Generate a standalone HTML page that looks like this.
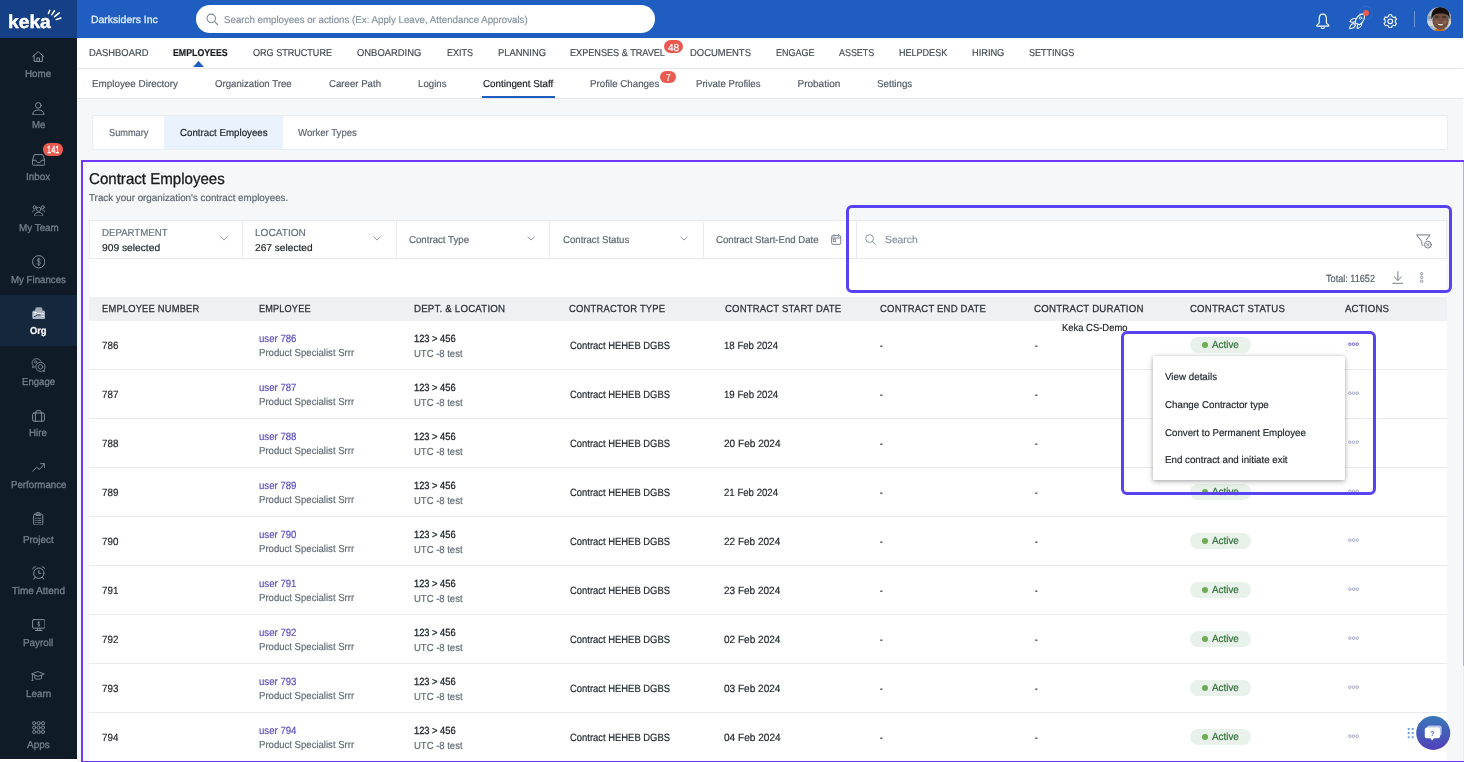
<!DOCTYPE html>
<html lang="en">
<head>
<meta charset="utf-8">
<title>Keka - Contract Employees</title>
<style>
*{box-sizing:border-box;margin:0;padding:0}
html,body{width:1464px;height:762px;overflow:hidden;background:#fff;font-family:"Liberation Sans",sans-serif;color:#212529}
body{position:relative}
#app{position:absolute;left:0;top:0;width:1464px;height:762px;overflow:hidden;will-change:transform}
.abs{position:absolute}
.t{text-rendering:geometricPrecision;-webkit-text-stroke:.18px;position:absolute;white-space:nowrap;transform-origin:0 50%;display:block}
#bg{position:absolute;left:77px;top:0;width:1387px;height:762px;background:#f6f7f9}
#side{position:absolute;left:0;top:0;width:76.75px;height:759.3px;background:#0f1b27}
#logo{position:absolute;left:0;top:0;width:76.75px;height:37.8px;background:#154085}
#orgbg{position:absolute;left:0;top:294.6px;width:76.75px;height:51.4px;background:#15273d}
#top{position:absolute;left:76.75px;top:0;width:1386.5px;height:37.6px;background:#1f5ec0}
#gsearch{position:absolute;left:196px;top:5px;width:459px;height:28px;border-radius:14px;background:#fff}
#nav1{position:absolute;left:76.75px;top:37.6px;width:1387px;height:30.4px;background:#fff;box-shadow:0 1px 2px rgba(0,0,0,.10)}
#nav2{position:absolute;left:76.75px;top:69px;width:1387px;height:30px;background:#fff;border-bottom:1px solid #e4e6ea}
.badge{position:absolute;background:#e9594f;border-radius:7px}
#tabs{position:absolute;left:92px;top:115px;width:1355.5px;height:34.5px;background:#fff;border:1px solid #ebedf0;border-radius:2px}
#tabact{position:absolute;left:164px;top:115.6px;width:118.9px;height:33.4px;background:#e9f2fd}
.pframe{position:absolute;border:2.3px solid #7038f5}
.bframe{position:absolute;border:3px solid #5742f4;border-radius:6px}
#filters{position:absolute;left:88.8px;top:220.3px;width:1358.4px;height:38.4px;background:#fff;border:1px solid #e9ebee}
.vd{position:absolute;top:221px;width:1px;height:37px;background:#e9ebee}
#totrow{position:absolute;left:88.8px;top:258.7px;width:1358.4px;height:38.3px;background:#fff}
#thead{position:absolute;left:88.8px;top:296.8px;width:1358.4px;height:24px;background:#eef0f4}
.row{position:absolute;left:88.8px;width:1358.4px;height:49px;background:#fff;border-bottom:1px solid #e9ebee}
.pill{position:absolute;left:1189.6px;width:61.6px;height:15.4px;border-radius:8px;background:#e8f1ea}
.pill i{position:absolute;left:12px;top:4.6px;width:6.2px;height:6.2px;border-radius:50%;background:#6dab55}
#menu{position:absolute;left:1152.5px;top:356px;width:192.2px;height:124px;background:#fff;box-shadow:0 1px 4px rgba(0,0,0,.30),0 2px 8px rgba(0,0,0,.10);border-radius:1.5px}
</style>
</head>
<body>
<div id="app">
<div id="bg"></div>
<div id="top"></div>
<span class="t" style="left:90.80px;top:14.20px;font-size:10.4px;line-height:13.5px;color:#e3ecfa;transform:scaleX(1.0059);-webkit-text-stroke:.3px #e3ecfa;">Darksiders Inc</span>
<div id="gsearch"></div>
<svg class="abs" style="left:205.5px;top:12.5px" width="13" height="13" viewBox="0 0 13 13" fill="none" stroke="#7d8795" stroke-width="1.1"><circle cx="5.3" cy="5.3" r="4.2"/><path d="M8.4 8.4 L12 12"/></svg>
<span class="t" style="left:224.00px;top:14.82px;font-size:9.9px;line-height:12.9px;color:#8791a0;transform:scaleX(0.9844);">Search employees or actions (Ex: Apply Leave, Attendance Approvals)</span>
<div id="nav1"></div>
<span class="t" style="left:89.00px;top:47.03px;font-size:10.0px;line-height:13.0px;color:#434a54;transform:scaleX(0.9386);">DASHBOARD</span>
<span class="t" style="left:173.25px;top:47.03px;font-size:10.0px;line-height:13.0px;color:#15191e;font-weight:bold;transform:scaleX(0.8791);">EMPLOYEES</span>
<span class="t" style="left:253.00px;top:47.03px;font-size:10.0px;line-height:13.0px;color:#434a54;transform:scaleX(0.9052);">ORG STRUCTURE</span>
<span class="t" style="left:357.25px;top:47.03px;font-size:10.0px;line-height:13.0px;color:#434a54;transform:scaleX(0.9408);">ONBOARDING</span>
<span class="t" style="left:446.50px;top:47.03px;font-size:10.0px;line-height:13.0px;color:#434a54;transform:scaleX(0.8982);">EXITS</span>
<span class="t" style="left:497.50px;top:47.03px;font-size:10.0px;line-height:13.0px;color:#434a54;transform:scaleX(0.9397);">PLANNING</span>
<span class="t" style="left:570.25px;top:47.03px;font-size:10.0px;line-height:13.0px;color:#434a54;transform:scaleX(0.9118);">EXPENSES &amp; TRAVEL</span>
<span class="t" style="left:690.00px;top:47.03px;font-size:10.0px;line-height:13.0px;color:#434a54;transform:scaleX(0.9456);">DOCUMENTS</span>
<span class="t" style="left:775.75px;top:47.03px;font-size:10.0px;line-height:13.0px;color:#434a54;transform:scaleX(0.8987);">ENGAGE</span>
<span class="t" style="left:839.25px;top:47.03px;font-size:10.0px;line-height:13.0px;color:#434a54;transform:scaleX(0.8922);">ASSETS</span>
<span class="t" style="left:899.25px;top:47.03px;font-size:10.0px;line-height:13.0px;color:#434a54;transform:scaleX(0.9034);">HELPDESK</span>
<span class="t" style="left:972.25px;top:47.03px;font-size:10.0px;line-height:13.0px;color:#434a54;transform:scaleX(0.9227);">HIRING</span>
<span class="t" style="left:1029.25px;top:47.03px;font-size:10.0px;line-height:13.0px;color:#434a54;transform:scaleX(0.9039);">SETTINGS</span>
<div class="badge" style="left:664.4px;top:40.4px;width:18.6px;height:12.5px"></div>
<span class="t" style="left:667.70px;top:42.02px;font-size:10.2px;line-height:13.3px;color:#fff;transform:scaleX(0.9858);">48</span>
<svg class="abs" style="left:193px;top:61px" width="11" height="6" viewBox="0 0 11 6"><path d="M0 6 L5.5 0 L11 6 Z" fill="#205dc1"/></svg>
<div id="nav2"></div>
<span class="t" style="left:92.00px;top:77.93px;font-size:10.0px;line-height:13.0px;color:#535b66;transform:scaleX(0.9857);">Employee Directory</span>
<span class="t" style="left:214.75px;top:77.93px;font-size:10.0px;line-height:13.0px;color:#535b66;transform:scaleX(0.9643);">Organization Tree</span>
<span class="t" style="left:329.00px;top:77.93px;font-size:10.0px;line-height:13.0px;color:#535b66;transform:scaleX(0.9652);">Career Path</span>
<span class="t" style="left:417.50px;top:77.93px;font-size:10.0px;line-height:13.0px;color:#535b66;transform:scaleX(0.9672);">Logins</span>
<span class="t" style="left:483.00px;top:77.93px;font-size:10.0px;line-height:13.0px;color:#15191e;transform:scaleX(0.9825);">Contingent Staff</span>
<span class="t" style="left:590.00px;top:77.93px;font-size:10.0px;line-height:13.0px;color:#535b66;transform:scaleX(0.9733);">Profile Changes</span>
<span class="t" style="left:696.25px;top:77.93px;font-size:10.0px;line-height:13.0px;color:#535b66;transform:scaleX(0.9592);">Private Profiles</span>
<span class="t" style="left:797.50px;top:77.93px;font-size:10.0px;line-height:13.0px;color:#535b66;">Probation</span>
<span class="t" style="left:876.75px;top:77.93px;font-size:10.0px;line-height:13.0px;color:#535b66;transform:scaleX(0.9756);">Settings</span>
<div class="badge" style="left:660.3px;top:71.1px;width:15.8px;height:12.3px"></div>
<span class="t" style="left:665.80px;top:72.42px;font-size:10.2px;line-height:13.3px;color:#fff;transform:scaleX(0.8167);">7</span>
<div class="abs" style="left:482px;top:96.4px;width:73px;height:2.1px;background:#205dc1"></div>
<div id="tabs"></div><div id="tabact"></div>
<span class="t" style="left:108.50px;top:127.42px;font-size:10.2px;line-height:13.3px;color:#5d6570;transform:scaleX(0.9035);">Summary</span>
<span class="t" style="left:179.60px;top:127.42px;font-size:10.2px;line-height:13.3px;color:#1a1e23;transform:scaleX(0.9549);">Contract Employees</span>
<span class="t" style="left:298.00px;top:127.42px;font-size:10.2px;line-height:13.3px;color:#5d6570;transform:scaleX(0.9431);">Worker Types</span>
<span class="t" style="left:89.00px;top:170.44px;font-size:15.6px;line-height:20.3px;color:#15191e;transform:scaleX(0.9672);-webkit-text-stroke:.3px #15191e;">Contract Employees</span>
<span class="t" style="left:89.00px;top:192.87px;font-size:9.9px;line-height:12.9px;color:#5d6570;transform:scaleX(0.9924);">Track your organization's contract employees.</span>
<div id="filters"></div>
<div class="vd" style="left:242.3px"></div>
<div class="vd" style="left:395.8px"></div>
<div class="vd" style="left:549.3px"></div>
<div class="vd" style="left:702.8px"></div>
<div class="vd" style="left:856.3px"></div>
<span class="t" style="left:101.60px;top:226.82px;font-size:10.2px;line-height:13.3px;color:#66707d;transform:scaleX(0.9476);">DEPARTMENT</span>
<span class="t" style="left:101.60px;top:241.84px;font-size:10.0px;line-height:13.0px;color:#1d2126;transform:scaleX(1.0241);">909 selected</span>
<svg class="abs" style="left:219.8px;top:236.1px" width="8" height="5" viewBox="0 0 8 5" fill="none" stroke="#7d8795" stroke-width=".9"><path d="M0.5 0.6 L4 4.1 L7.5 0.6"/></svg>
<span class="t" style="left:255.00px;top:226.82px;font-size:10.2px;line-height:13.3px;color:#66707d;transform:scaleX(0.9909);">LOCATION</span>
<span class="t" style="left:255.00px;top:241.84px;font-size:10.0px;line-height:13.0px;color:#1d2126;transform:scaleX(1.0152);">267 selected</span>
<svg class="abs" style="left:373.2px;top:236.1px" width="8" height="5" viewBox="0 0 8 5" fill="none" stroke="#7d8795" stroke-width=".9"><path d="M0.5 0.6 L4 4.1 L7.5 0.6"/></svg>
<span class="t" style="left:408.90px;top:234.03px;font-size:10.0px;line-height:13.0px;color:#5d6570;transform:scaleX(0.9667);">Contract Type</span>
<svg class="abs" style="left:526.5px;top:236.1px" width="8" height="5" viewBox="0 0 8 5" fill="none" stroke="#7d8795" stroke-width=".9"><path d="M0.5 0.6 L4 4.1 L7.5 0.6"/></svg>
<span class="t" style="left:562.50px;top:234.03px;font-size:10.0px;line-height:13.0px;color:#5d6570;transform:scaleX(0.9612);">Contract Status</span>
<svg class="abs" style="left:680px;top:236.1px" width="8" height="5" viewBox="0 0 8 5" fill="none" stroke="#7d8795" stroke-width=".9"><path d="M0.5 0.6 L4 4.1 L7.5 0.6"/></svg>
<span class="t" style="left:715.75px;top:234.03px;font-size:10.0px;line-height:13.0px;color:#5d6570;transform:scaleX(0.9612);">Contract Start-End Date</span>
<svg class="abs" style="left:831.3px;top:234.3px" width="10.4" height="11" viewBox="0 0 10.4 11" fill="none" stroke="#6b7480" stroke-width=".9"><rect x="0.6" y="1.6" width="9.2" height="8.8" rx="1.6"/><path d="M2.9 0.3 V2.6 M7.5 0.3 V2.6 M0.8 4 H9.6"/><rect x="2.2" y="5.2" width="2.5" height="2.5" stroke-width=".7"/></svg>
<svg class="abs" style="left:864.8px;top:234px" width="11.4" height="11.4" viewBox="0 0 11.4 11.4" fill="none" stroke="#8d97a5" stroke-width="1"><circle cx="4.6" cy="4.6" r="3.9"/><path d="M7.5 7.5 L10.8 10.8"/></svg>
<span class="t" style="left:885.00px;top:233.82px;font-size:10.2px;line-height:13.3px;color:#8791a0;transform:scaleX(1.0122);">Search</span>
<svg class="abs" style="left:1415.6px;top:233.8px" width="17" height="15.4" viewBox="0 0 17 15.4" fill="none" stroke="#6b7480" stroke-width=".95" stroke-linejoin="round" stroke-linecap="round"><path d="M10.4 5.7 L14.1 0.9 H0.7 L5.8 7.6 V10.6 C5.8 11.3 6.2 11.7 7 11.7"/><circle cx="11.9" cy="10.7" r="3.4"/><path d="M10.5 9.3 L13.3 12.1 M13.3 9.3 L10.5 12.1" stroke-width=".85"/></svg>
<div id="totrow"></div>
<span class="t" style="left:1326.30px;top:273.35px;font-size:10.4px;line-height:13.5px;color:#535b66;transform:scaleX(0.8776);">Total: 11652</span>
<svg class="abs" style="left:1391.6px;top:270.9px" width="11.8" height="13" viewBox="0 0 11.8 13" fill="none" stroke="#6b7480" stroke-width=".95"><path d="M5.9 0.3 V9.4 M2 5.6 L5.9 9.5 L9.8 5.6 M0.3 12.3 H11.5"/></svg>
<svg class="abs" style="left:1419.4px;top:271.8px" width="5.4" height="11" viewBox="0 0 5.4 11" fill="none" stroke="#7a8390" stroke-width=".8"><circle cx="2.7" cy="1.7" r="1.2"/><circle cx="2.7" cy="5.5" r="1.2"/><circle cx="2.7" cy="9.3" r="1.2"/></svg>
<div id="thead"></div>
<span class="t" style="left:101.75px;top:303.02px;font-size:10.2px;line-height:13.3px;color:#2a2f36;letter-spacing:0.2px;transform:scaleX(0.9190);-webkit-text-stroke:.25px #2a2f36;">EMPLOYEE NUMBER</span>
<span class="t" style="left:259.25px;top:303.02px;font-size:10.2px;line-height:13.3px;color:#2a2f36;letter-spacing:0.2px;transform:scaleX(0.8963);-webkit-text-stroke:.25px #2a2f36;">EMPLOYEE</span>
<span class="t" style="left:414.00px;top:303.02px;font-size:10.2px;line-height:13.3px;color:#2a2f36;letter-spacing:0.2px;transform:scaleX(0.9517);-webkit-text-stroke:.25px #2a2f36;">DEPT. &amp; LOCATION</span>
<span class="t" style="left:569.25px;top:303.02px;font-size:10.2px;line-height:13.3px;color:#2a2f36;letter-spacing:0.2px;transform:scaleX(0.9261);-webkit-text-stroke:.25px #2a2f36;">CONTRACTOR TYPE</span>
<span class="t" style="left:724.50px;top:303.02px;font-size:10.2px;line-height:13.3px;color:#2a2f36;letter-spacing:0.2px;transform:scaleX(0.9341);-webkit-text-stroke:.25px #2a2f36;">CONTRACT START DATE</span>
<span class="t" style="left:879.50px;top:303.02px;font-size:10.2px;line-height:13.3px;color:#2a2f36;letter-spacing:0.2px;transform:scaleX(0.9349);-webkit-text-stroke:.25px #2a2f36;">CONTRACT END DATE</span>
<span class="t" style="left:1034.30px;top:303.02px;font-size:10.2px;line-height:13.3px;color:#2a2f36;letter-spacing:0.2px;transform:scaleX(0.9528);-webkit-text-stroke:.25px #2a2f36;">CONTRACT DURATION</span>
<span class="t" style="left:1189.50px;top:303.02px;font-size:10.2px;line-height:13.3px;color:#2a2f36;letter-spacing:0.2px;transform:scaleX(0.9415);-webkit-text-stroke:.25px #2a2f36;">CONTRACT STATUS</span>
<span class="t" style="left:1344.50px;top:303.02px;font-size:10.2px;line-height:13.3px;color:#2a2f36;letter-spacing:0.2px;transform:scaleX(0.9465);-webkit-text-stroke:.25px #2a2f36;">ACTIONS</span>
<div class="row" style="top:320.5px"></div>
<span class="t" style="left:101.60px;top:340.31px;font-size:10.5px;line-height:13.7px;color:#1d2126;transform:scaleX(0.9333);">786</span>
<span class="t" style="left:259.40px;top:333.31px;font-size:10.5px;line-height:13.7px;color:#5a4cc0;transform:scaleX(0.9166);">user 786</span>
<span class="t" style="left:259.40px;top:347.02px;font-size:10.2px;line-height:13.3px;color:#626a75;transform:scaleX(0.9387);">Product Specialist Srrr</span>
<span class="t" style="left:414.40px;top:333.05px;font-size:10.4px;line-height:13.5px;color:#1d2126;transform:scaleX(0.8944);-webkit-text-stroke:.3px #1d2126;">123 &gt; 456</span>
<span class="t" style="left:414.40px;top:347.92px;font-size:10.2px;line-height:13.3px;color:#626a75;transform:scaleX(0.9321);">UTC -8 test</span>
<span class="t" style="left:569.50px;top:340.31px;font-size:10.5px;line-height:13.7px;color:#1d2126;transform:scaleX(0.8973);">Contract HEHEB DGBS</span>
<span class="t" style="left:724.30px;top:340.31px;font-size:10.5px;line-height:13.7px;color:#1d2126;transform:scaleX(0.9167);">18 Feb 2024</span>
<span class="t" style="left:879.50px;top:340.31px;font-size:10.5px;line-height:13.7px;color:#1d2126;transform:scaleX(0.7500);">-</span>
<span class="t" style="left:1034.50px;top:340.31px;font-size:10.5px;line-height:13.7px;color:#1d2126;transform:scaleX(0.7500);">-</span>
<div class="pill" style="top:337.4px"><i></i></div>
<span class="t" style="left:1211.70px;top:339.33px;font-size:10.3px;line-height:13.4px;color:#2f7038;transform:scaleX(0.9571);">Active</span>
<svg class="abs" style="left:1348.4px;top:342.4px" width="11" height="4.4" viewBox="0 0 11 4.4" fill="none" stroke="#5b57c9" stroke-width=".9"><circle cx="1.8" cy="2.2" r="1.3"/><circle cx="5.5" cy="2.2" r="1.3"/><circle cx="9.2" cy="2.2" r="1.3"/></svg>
<div class="row" style="top:369.5px"></div>
<span class="t" style="left:101.60px;top:389.31px;font-size:10.5px;line-height:13.7px;color:#1d2126;transform:scaleX(0.9333);">787</span>
<span class="t" style="left:259.40px;top:382.31px;font-size:10.5px;line-height:13.7px;color:#5a4cc0;transform:scaleX(0.9166);">user 787</span>
<span class="t" style="left:259.40px;top:396.02px;font-size:10.2px;line-height:13.3px;color:#626a75;transform:scaleX(0.9387);">Product Specialist Srrr</span>
<span class="t" style="left:414.40px;top:382.05px;font-size:10.4px;line-height:13.5px;color:#1d2126;transform:scaleX(0.8944);-webkit-text-stroke:.3px #1d2126;">123 &gt; 456</span>
<span class="t" style="left:414.40px;top:396.92px;font-size:10.2px;line-height:13.3px;color:#626a75;transform:scaleX(0.9321);">UTC -8 test</span>
<span class="t" style="left:569.50px;top:389.31px;font-size:10.5px;line-height:13.7px;color:#1d2126;transform:scaleX(0.8973);">Contract HEHEB DGBS</span>
<span class="t" style="left:724.30px;top:389.31px;font-size:10.5px;line-height:13.7px;color:#1d2126;transform:scaleX(0.9184);">19 Feb 2024</span>
<span class="t" style="left:879.50px;top:389.31px;font-size:10.5px;line-height:13.7px;color:#1d2126;transform:scaleX(0.7500);">-</span>
<span class="t" style="left:1034.50px;top:389.31px;font-size:10.5px;line-height:13.7px;color:#1d2126;transform:scaleX(0.7500);">-</span>
<div class="pill" style="top:386.4px"><i></i></div>
<span class="t" style="left:1211.70px;top:388.33px;font-size:10.3px;line-height:13.4px;color:#2f7038;transform:scaleX(0.9571);">Active</span>
<svg class="abs" style="left:1348.4px;top:391.4px" width="11" height="4.4" viewBox="0 0 11 4.4" fill="none" stroke="#9aa1bd" stroke-width=".9"><circle cx="1.8" cy="2.2" r="1.3"/><circle cx="5.5" cy="2.2" r="1.3"/><circle cx="9.2" cy="2.2" r="1.3"/></svg>
<div class="row" style="top:418.5px"></div>
<span class="t" style="left:101.60px;top:438.31px;font-size:10.5px;line-height:13.7px;color:#1d2126;transform:scaleX(0.9333);">788</span>
<span class="t" style="left:259.40px;top:431.31px;font-size:10.5px;line-height:13.7px;color:#5a4cc0;transform:scaleX(0.9166);">user 788</span>
<span class="t" style="left:259.40px;top:445.02px;font-size:10.2px;line-height:13.3px;color:#626a75;transform:scaleX(0.9387);">Product Specialist Srrr</span>
<span class="t" style="left:414.40px;top:431.05px;font-size:10.4px;line-height:13.5px;color:#1d2126;transform:scaleX(0.8944);-webkit-text-stroke:.3px #1d2126;">123 &gt; 456</span>
<span class="t" style="left:414.40px;top:445.92px;font-size:10.2px;line-height:13.3px;color:#626a75;transform:scaleX(0.9321);">UTC -8 test</span>
<span class="t" style="left:569.50px;top:438.31px;font-size:10.5px;line-height:13.7px;color:#1d2126;transform:scaleX(0.8973);">Contract HEHEB DGBS</span>
<span class="t" style="left:724.30px;top:438.31px;font-size:10.5px;line-height:13.7px;color:#1d2126;transform:scaleX(0.9590);">20 Feb 2024</span>
<span class="t" style="left:879.50px;top:438.31px;font-size:10.5px;line-height:13.7px;color:#1d2126;transform:scaleX(0.7500);">-</span>
<span class="t" style="left:1034.50px;top:438.31px;font-size:10.5px;line-height:13.7px;color:#1d2126;transform:scaleX(0.7500);">-</span>
<div class="pill" style="top:435.4px"><i></i></div>
<span class="t" style="left:1211.70px;top:437.33px;font-size:10.3px;line-height:13.4px;color:#2f7038;transform:scaleX(0.9571);">Active</span>
<svg class="abs" style="left:1348.4px;top:440.4px" width="11" height="4.4" viewBox="0 0 11 4.4" fill="none" stroke="#9aa1bd" stroke-width=".9"><circle cx="1.8" cy="2.2" r="1.3"/><circle cx="5.5" cy="2.2" r="1.3"/><circle cx="9.2" cy="2.2" r="1.3"/></svg>
<div class="row" style="top:467.5px"></div>
<span class="t" style="left:101.60px;top:487.31px;font-size:10.5px;line-height:13.7px;color:#1d2126;transform:scaleX(0.9333);">789</span>
<span class="t" style="left:259.40px;top:480.31px;font-size:10.5px;line-height:13.7px;color:#5a4cc0;transform:scaleX(0.9166);">user 789</span>
<span class="t" style="left:259.40px;top:494.02px;font-size:10.2px;line-height:13.3px;color:#626a75;transform:scaleX(0.9387);">Product Specialist Srrr</span>
<span class="t" style="left:414.40px;top:480.05px;font-size:10.4px;line-height:13.5px;color:#1d2126;transform:scaleX(0.8944);-webkit-text-stroke:.3px #1d2126;">123 &gt; 456</span>
<span class="t" style="left:414.40px;top:494.92px;font-size:10.2px;line-height:13.3px;color:#626a75;transform:scaleX(0.9321);">UTC -8 test</span>
<span class="t" style="left:569.50px;top:487.31px;font-size:10.5px;line-height:13.7px;color:#1d2126;transform:scaleX(0.8973);">Contract HEHEB DGBS</span>
<span class="t" style="left:724.30px;top:487.31px;font-size:10.5px;line-height:13.7px;color:#1d2126;transform:scaleX(0.9167);">21 Feb 2024</span>
<span class="t" style="left:879.50px;top:487.31px;font-size:10.5px;line-height:13.7px;color:#1d2126;transform:scaleX(0.7500);">-</span>
<span class="t" style="left:1034.50px;top:487.31px;font-size:10.5px;line-height:13.7px;color:#1d2126;transform:scaleX(0.7500);">-</span>
<div class="pill" style="top:484.4px"><i></i></div>
<span class="t" style="left:1211.70px;top:486.33px;font-size:10.3px;line-height:13.4px;color:#2f7038;transform:scaleX(0.9571);">Active</span>
<svg class="abs" style="left:1348.4px;top:489.4px" width="11" height="4.4" viewBox="0 0 11 4.4" fill="none" stroke="#9aa1bd" stroke-width=".9"><circle cx="1.8" cy="2.2" r="1.3"/><circle cx="5.5" cy="2.2" r="1.3"/><circle cx="9.2" cy="2.2" r="1.3"/></svg>
<div class="row" style="top:516.5px"></div>
<span class="t" style="left:101.60px;top:536.31px;font-size:10.5px;line-height:13.7px;color:#1d2126;transform:scaleX(0.9333);">790</span>
<span class="t" style="left:259.40px;top:529.31px;font-size:10.5px;line-height:13.7px;color:#5a4cc0;transform:scaleX(0.9166);">user 790</span>
<span class="t" style="left:259.40px;top:543.02px;font-size:10.2px;line-height:13.3px;color:#626a75;transform:scaleX(0.9387);">Product Specialist Srrr</span>
<span class="t" style="left:414.40px;top:529.05px;font-size:10.4px;line-height:13.5px;color:#1d2126;transform:scaleX(0.8944);-webkit-text-stroke:.3px #1d2126;">123 &gt; 456</span>
<span class="t" style="left:414.40px;top:543.92px;font-size:10.2px;line-height:13.3px;color:#626a75;transform:scaleX(0.9321);">UTC -8 test</span>
<span class="t" style="left:569.50px;top:536.31px;font-size:10.5px;line-height:13.7px;color:#1d2126;transform:scaleX(0.8973);">Contract HEHEB DGBS</span>
<span class="t" style="left:724.30px;top:536.31px;font-size:10.5px;line-height:13.7px;color:#1d2126;transform:scaleX(0.9539);">22 Feb 2024</span>
<span class="t" style="left:879.50px;top:536.31px;font-size:10.5px;line-height:13.7px;color:#1d2126;transform:scaleX(0.7500);">-</span>
<span class="t" style="left:1034.50px;top:536.31px;font-size:10.5px;line-height:13.7px;color:#1d2126;transform:scaleX(0.7500);">-</span>
<div class="pill" style="top:533.4px"><i></i></div>
<span class="t" style="left:1211.70px;top:535.33px;font-size:10.3px;line-height:13.4px;color:#2f7038;transform:scaleX(0.9571);">Active</span>
<svg class="abs" style="left:1348.4px;top:538.4px" width="11" height="4.4" viewBox="0 0 11 4.4" fill="none" stroke="#9aa1bd" stroke-width=".9"><circle cx="1.8" cy="2.2" r="1.3"/><circle cx="5.5" cy="2.2" r="1.3"/><circle cx="9.2" cy="2.2" r="1.3"/></svg>
<div class="row" style="top:565.5px"></div>
<span class="t" style="left:101.60px;top:585.31px;font-size:10.5px;line-height:13.7px;color:#1d2126;transform:scaleX(0.9333);">791</span>
<span class="t" style="left:259.40px;top:578.31px;font-size:10.5px;line-height:13.7px;color:#5a4cc0;transform:scaleX(0.9166);">user 791</span>
<span class="t" style="left:259.40px;top:592.02px;font-size:10.2px;line-height:13.3px;color:#626a75;transform:scaleX(0.9387);">Product Specialist Srrr</span>
<span class="t" style="left:414.40px;top:578.05px;font-size:10.4px;line-height:13.5px;color:#1d2126;transform:scaleX(0.8944);-webkit-text-stroke:.3px #1d2126;">123 &gt; 456</span>
<span class="t" style="left:414.40px;top:592.92px;font-size:10.2px;line-height:13.3px;color:#626a75;transform:scaleX(0.9321);">UTC -8 test</span>
<span class="t" style="left:569.50px;top:585.31px;font-size:10.5px;line-height:13.7px;color:#1d2126;transform:scaleX(0.8973);">Contract HEHEB DGBS</span>
<span class="t" style="left:724.30px;top:585.31px;font-size:10.5px;line-height:13.7px;color:#1d2126;transform:scaleX(0.9539);">23 Feb 2024</span>
<span class="t" style="left:879.50px;top:585.31px;font-size:10.5px;line-height:13.7px;color:#1d2126;transform:scaleX(0.7500);">-</span>
<span class="t" style="left:1034.50px;top:585.31px;font-size:10.5px;line-height:13.7px;color:#1d2126;transform:scaleX(0.7500);">-</span>
<div class="pill" style="top:582.4px"><i></i></div>
<span class="t" style="left:1211.70px;top:584.33px;font-size:10.3px;line-height:13.4px;color:#2f7038;transform:scaleX(0.9571);">Active</span>
<svg class="abs" style="left:1348.4px;top:587.4px" width="11" height="4.4" viewBox="0 0 11 4.4" fill="none" stroke="#9aa1bd" stroke-width=".9"><circle cx="1.8" cy="2.2" r="1.3"/><circle cx="5.5" cy="2.2" r="1.3"/><circle cx="9.2" cy="2.2" r="1.3"/></svg>
<div class="row" style="top:614.5px"></div>
<span class="t" style="left:101.60px;top:634.31px;font-size:10.5px;line-height:13.7px;color:#1d2126;transform:scaleX(0.9333);">792</span>
<span class="t" style="left:259.40px;top:627.31px;font-size:10.5px;line-height:13.7px;color:#5a4cc0;transform:scaleX(0.9166);">user 792</span>
<span class="t" style="left:259.40px;top:641.02px;font-size:10.2px;line-height:13.3px;color:#626a75;transform:scaleX(0.9387);">Product Specialist Srrr</span>
<span class="t" style="left:414.40px;top:627.05px;font-size:10.4px;line-height:13.5px;color:#1d2126;transform:scaleX(0.8944);-webkit-text-stroke:.3px #1d2126;">123 &gt; 456</span>
<span class="t" style="left:414.40px;top:641.92px;font-size:10.2px;line-height:13.3px;color:#626a75;transform:scaleX(0.9321);">UTC -8 test</span>
<span class="t" style="left:569.50px;top:634.31px;font-size:10.5px;line-height:13.7px;color:#1d2126;transform:scaleX(0.8973);">Contract HEHEB DGBS</span>
<span class="t" style="left:724.30px;top:634.31px;font-size:10.5px;line-height:13.7px;color:#1d2126;transform:scaleX(0.9573);">02 Feb 2024</span>
<span class="t" style="left:879.50px;top:634.31px;font-size:10.5px;line-height:13.7px;color:#1d2126;transform:scaleX(0.7500);">-</span>
<span class="t" style="left:1034.50px;top:634.31px;font-size:10.5px;line-height:13.7px;color:#1d2126;transform:scaleX(0.7500);">-</span>
<div class="pill" style="top:631.4px"><i></i></div>
<span class="t" style="left:1211.70px;top:633.33px;font-size:10.3px;line-height:13.4px;color:#2f7038;transform:scaleX(0.9571);">Active</span>
<svg class="abs" style="left:1348.4px;top:636.4px" width="11" height="4.4" viewBox="0 0 11 4.4" fill="none" stroke="#9aa1bd" stroke-width=".9"><circle cx="1.8" cy="2.2" r="1.3"/><circle cx="5.5" cy="2.2" r="1.3"/><circle cx="9.2" cy="2.2" r="1.3"/></svg>
<div class="row" style="top:663.5px"></div>
<span class="t" style="left:101.60px;top:683.31px;font-size:10.5px;line-height:13.7px;color:#1d2126;transform:scaleX(0.9333);">793</span>
<span class="t" style="left:259.40px;top:676.31px;font-size:10.5px;line-height:13.7px;color:#5a4cc0;transform:scaleX(0.9166);">user 793</span>
<span class="t" style="left:259.40px;top:690.02px;font-size:10.2px;line-height:13.3px;color:#626a75;transform:scaleX(0.9387);">Product Specialist Srrr</span>
<span class="t" style="left:414.40px;top:676.05px;font-size:10.4px;line-height:13.5px;color:#1d2126;transform:scaleX(0.8944);-webkit-text-stroke:.3px #1d2126;">123 &gt; 456</span>
<span class="t" style="left:414.40px;top:690.92px;font-size:10.2px;line-height:13.3px;color:#626a75;transform:scaleX(0.9321);">UTC -8 test</span>
<span class="t" style="left:569.50px;top:683.31px;font-size:10.5px;line-height:13.7px;color:#1d2126;transform:scaleX(0.8973);">Contract HEHEB DGBS</span>
<span class="t" style="left:724.30px;top:683.31px;font-size:10.5px;line-height:13.7px;color:#1d2126;transform:scaleX(0.9573);">03 Feb 2024</span>
<span class="t" style="left:879.50px;top:683.31px;font-size:10.5px;line-height:13.7px;color:#1d2126;transform:scaleX(0.7500);">-</span>
<span class="t" style="left:1034.50px;top:683.31px;font-size:10.5px;line-height:13.7px;color:#1d2126;transform:scaleX(0.7500);">-</span>
<div class="pill" style="top:680.4px"><i></i></div>
<span class="t" style="left:1211.70px;top:682.33px;font-size:10.3px;line-height:13.4px;color:#2f7038;transform:scaleX(0.9571);">Active</span>
<svg class="abs" style="left:1348.4px;top:685.4px" width="11" height="4.4" viewBox="0 0 11 4.4" fill="none" stroke="#9aa1bd" stroke-width=".9"><circle cx="1.8" cy="2.2" r="1.3"/><circle cx="5.5" cy="2.2" r="1.3"/><circle cx="9.2" cy="2.2" r="1.3"/></svg>
<div class="row" style="top:712.5px"></div>
<span class="t" style="left:101.60px;top:732.31px;font-size:10.5px;line-height:13.7px;color:#1d2126;transform:scaleX(0.9333);">794</span>
<span class="t" style="left:259.40px;top:725.31px;font-size:10.5px;line-height:13.7px;color:#5a4cc0;transform:scaleX(0.9166);">user 794</span>
<span class="t" style="left:259.40px;top:739.02px;font-size:10.2px;line-height:13.3px;color:#626a75;transform:scaleX(0.9387);">Product Specialist Srrr</span>
<span class="t" style="left:414.40px;top:725.05px;font-size:10.4px;line-height:13.5px;color:#1d2126;transform:scaleX(0.8944);-webkit-text-stroke:.3px #1d2126;">123 &gt; 456</span>
<span class="t" style="left:414.40px;top:739.92px;font-size:10.2px;line-height:13.3px;color:#626a75;transform:scaleX(0.9321);">UTC -8 test</span>
<span class="t" style="left:569.50px;top:732.31px;font-size:10.5px;line-height:13.7px;color:#1d2126;transform:scaleX(0.8973);">Contract HEHEB DGBS</span>
<span class="t" style="left:724.30px;top:732.31px;font-size:10.5px;line-height:13.7px;color:#1d2126;transform:scaleX(0.9607);">04 Feb 2024</span>
<span class="t" style="left:879.50px;top:732.31px;font-size:10.5px;line-height:13.7px;color:#1d2126;transform:scaleX(0.7500);">-</span>
<span class="t" style="left:1034.50px;top:732.31px;font-size:10.5px;line-height:13.7px;color:#1d2126;transform:scaleX(0.7500);">-</span>
<div class="pill" style="top:729.4px"><i></i></div>
<span class="t" style="left:1211.70px;top:731.33px;font-size:10.3px;line-height:13.4px;color:#2f7038;transform:scaleX(0.9571);">Active</span>
<svg class="abs" style="left:1348.4px;top:734.4px" width="11" height="4.4" viewBox="0 0 11 4.4" fill="none" stroke="#9aa1bd" stroke-width=".9"><circle cx="1.8" cy="2.2" r="1.3"/><circle cx="5.5" cy="2.2" r="1.3"/><circle cx="9.2" cy="2.2" r="1.3"/></svg>
<span class="t" style="left:1061.50px;top:321.92px;font-size:10.2px;line-height:13.3px;color:#1d2126;transform:scaleX(0.9254);">Keka CS-Demo</span>
<div class="pframe" style="left:81.2px;top:159.9px;width:1390px;height:603.1px"></div>
<div class="bframe" style="left:846.2px;top:205.2px;width:605.6px;height:87.6px"></div>
<div class="bframe" style="left:1120.6px;top:330.6px;width:255.5px;height:164.4px"></div>
<div id="menu"></div>
<span class="t" style="left:1165.30px;top:372.02px;font-size:9.9px;line-height:12.9px;color:#1d2126;transform:scaleX(0.9909);">View details</span>
<span class="t" style="left:1165.30px;top:399.92px;font-size:9.9px;line-height:12.9px;color:#1d2126;transform:scaleX(0.9900);">Change Contractor type</span>
<span class="t" style="left:1165.30px;top:427.92px;font-size:9.9px;line-height:12.9px;color:#1d2126;transform:scaleX(0.9828);">Convert to Permanent Employee</span>
<span class="t" style="left:1165.30px;top:454.72px;font-size:9.9px;line-height:12.9px;color:#1d2126;transform:scaleX(0.9878);">End contract and initiate exit</span>
<div id="side"><div id="logo"></div><div id="orgbg"></div></div>
<span class="t" style="left:7.86px;top:9.94px;font-size:18.5px;line-height:24.1px;color:#fff;font-weight:bold;transform:scaleX(1.0400);-webkit-text-stroke:.45px #fff;">keka</span>
<svg class="abs" style="left:46px;top:8px" width="18" height="14" viewBox="46 8 18 14" fill="none" stroke="#fff" stroke-width="1.5" stroke-linecap="round"><path d="M48.4 13.5 L49.8 10.3 M51.8 14.6 L54.5 10.8 M54.5 16.6 L59.3 12.8 M56.2 19.6 L60.9 18"/></svg>
<span class="t" style="left:25.00px;top:68.15px;font-size:10.1px;line-height:13.1px;color:#76818f;transform:scaleX(0.9703);-webkit-text-stroke:.28px #76818f;">Home</span>
<span class="t" style="left:31.50px;top:118.85px;font-size:10.1px;line-height:13.1px;color:#76818f;transform:scaleX(0.9543);-webkit-text-stroke:.28px #76818f;">Me</span>
<span class="t" style="left:26.25px;top:170.95px;font-size:10.1px;line-height:13.1px;color:#76818f;transform:scaleX(0.9738);-webkit-text-stroke:.28px #76818f;">Inbox</span>
<span class="t" style="left:18.60px;top:222.15px;font-size:10.1px;line-height:13.1px;color:#76818f;transform:scaleX(0.9770);-webkit-text-stroke:.28px #76818f;">My Team</span>
<span class="t" style="left:11.00px;top:273.75px;font-size:10.1px;line-height:13.1px;color:#76818f;transform:scaleX(0.9586);-webkit-text-stroke:.28px #76818f;">My Finances</span>
<span class="t" style="left:30.00px;top:325.05px;font-size:10.1px;line-height:13.1px;color:#fff;font-weight:bold;transform:scaleX(0.9224);">Org</span>
<span class="t" style="left:21.70px;top:376.35px;font-size:10.1px;line-height:13.1px;color:#76818f;transform:scaleX(0.9492);-webkit-text-stroke:.28px #76818f;">Engage</span>
<span class="t" style="left:29.30px;top:427.15px;font-size:10.1px;line-height:13.1px;color:#76818f;transform:scaleX(0.9633);-webkit-text-stroke:.28px #76818f;">Hire</span>
<span class="t" style="left:10.60px;top:478.75px;font-size:10.1px;line-height:13.1px;color:#76818f;transform:scaleX(0.9593);-webkit-text-stroke:.28px #76818f;">Performance</span>
<span class="t" style="left:22.80px;top:533.95px;font-size:10.1px;line-height:13.1px;color:#76818f;transform:scaleX(0.9775);-webkit-text-stroke:.28px #76818f;">Project</span>
<span class="t" style="left:11.80px;top:585.35px;font-size:10.1px;line-height:13.1px;color:#76818f;transform:scaleX(0.9901);-webkit-text-stroke:.28px #76818f;">Time Attend</span>
<span class="t" style="left:23.30px;top:636.75px;font-size:10.1px;line-height:13.1px;color:#76818f;transform:scaleX(0.9801);-webkit-text-stroke:.28px #76818f;">Payroll</span>
<span class="t" style="left:26.00px;top:687.75px;font-size:10.1px;line-height:13.1px;color:#76818f;transform:scaleX(0.9761);-webkit-text-stroke:.28px #76818f;">Learn</span>
<span class="t" style="left:27.20px;top:739.15px;font-size:10.1px;line-height:13.1px;color:#76818f;transform:scaleX(0.9843);-webkit-text-stroke:.28px #76818f;">Apps</span>
<div class="badge" style="left:42.8px;top:143.3px;width:20.4px;height:12.5px;border-radius:6.3px"></div>
<span class="t" style="left:46.90px;top:144.22px;font-size:10.2px;line-height:13.3px;color:#fff;transform:scaleX(0.7328);-webkit-text-stroke:.3px #fff;">141</span>
<svg class="abs" style="left:32.4px;top:51px" width="12.4" height="11" viewBox="0 0 12.4 11" fill="none" stroke="#8691a0" stroke-width="1.0" stroke-linecap="round" stroke-linejoin="round"><path d="M0.6 5.6 L6.2 0.6 L11.8 5.6 M2.1 4.6 V10.4 H10.3 V4.6 M4.9 10.4 V7 H7.5 V10.4"/></svg>
<svg class="abs" style="left:32.3px;top:101.8px" width="12.6" height="13.2" viewBox="0 0 12.6 13.2" fill="none" stroke="#8691a0" stroke-width="1.0" stroke-linecap="round" stroke-linejoin="round"><circle cx="6.3" cy="3.4" r="2.8"/><path d="M0.7 12.5 C0.7 9.3 3 8 6.3 8 S11.9 9.3 11.9 12.5 Z"/></svg>
<svg class="abs" style="left:31.7px;top:153.8px" width="13.4" height="11.8" viewBox="0 0 13.4 11.8" fill="none" stroke="#8691a0" stroke-width="1.0" stroke-linecap="round" stroke-linejoin="round"><path d="M2.7 0.6 H10.7 L12.8 6.2 V10.2 a1 1 0 0 1 -1 1 H1.6 a1 1 0 0 1 -1 -1 V6.2 Z"/><path d="M0.6 6.2 H4 C4 8 5.2 8.6 6.7 8.6 S9.4 8 9.4 6.2 H12.8"/></svg>
<svg class="abs" style="left:31.9px;top:204.5px" width="13.4" height="11.4" viewBox="0 0 13.4 11.4" fill="none" stroke="#8691a0" stroke-width="0.9" stroke-linecap="round" stroke-linejoin="round"><circle cx="6.7" cy="4.3" r="2.1"/><path d="M2.6 10.8 C2.6 8.2 4.4 7.4 6.7 7.4 S10.8 8.2 10.8 10.8 Z"/><circle cx="2.6" cy="2.2" r="1.5"/><circle cx="10.8" cy="2.2" r="1.5"/><path d="M0.6 7 C0.6 5.6 1.4 4.9 2.8 4.9 M12.8 7 C12.8 5.6 12 4.9 10.6 4.9"/></svg>
<svg class="abs" style="left:31.6px;top:255.1px" width="13.6" height="13.6" viewBox="0 0 13.6 13.6" fill="none" stroke="#8691a0" stroke-width="1.0" stroke-linecap="round" stroke-linejoin="round"><circle cx="6.8" cy="6.8" r="6.2"/><path d="M8.5 5 C8.2 4.2 7.5 4 6.8 4 C5.8 4 5.2 4.6 5.2 5.3 C5.2 7.2 8.5 6.3 8.5 8.2 C8.5 9 7.8 9.6 6.8 9.6 C6 9.6 5.3 9.2 5.1 8.5 M6.8 3 V10.6" stroke-width=".85"/></svg>
<svg class="abs" style="left:31.7px;top:306.9px" width="13.6" height="12.6" viewBox="0 0 13.6 12.6" fill="none" stroke="none" stroke-width="1.0" stroke-linecap="round" stroke-linejoin="round"><path d="M3.2 5 V2 a1.8 1.8 0 0 1 1.8 -1.8 H8.6 a1.8 1.8 0 0 1 1.8 1.8 V5 Z" fill="#9ba7b5"/><rect x="0.2" y="3.6" width="13.1" height="8.6" rx="2.2" fill="#a9b5c2"/><path d="M2 5.6 H4.4 M5.4 6.7 H9 M2 7.9 H3.3 M10.2 6.6 h1 M10 9.4 h1.6" stroke="#fff" stroke-width="1" fill="none"/><path d="M2.4 9.5 C4.4 9.5 4.4 7.9 5.4 7.9 H8.2" stroke="#15273d" stroke-width=".9" fill="none"/></svg>
<svg class="abs" style="left:31.2px;top:357.7px" width="14.6" height="14.2" viewBox="0 0 14.6 14.2" fill="none" stroke="#8691a0" stroke-width="0.9" stroke-linecap="round" stroke-linejoin="round"><path d="M4.2 8.6 L1.6 9.6 L2.2 7.4 C0.2 5 1.2 1.8 4.2 0.9 C6.4 0.3 8.6 1.2 9.6 2.8"/><circle cx="4.6" cy="4" r="1.2" stroke-width=".8"/><path d="M13 12.4 L13.6 13.6 L11.4 13 C8.4 14.2 5.2 12.4 4.9 9.4 C4.6 6.2 7.2 4.2 9.6 4.2 C12.4 4.2 14.2 6.6 14 9 C13.9 10.4 13.6 11.4 13 12.4 Z"/><circle cx="9.5" cy="8.8" r="2.2" stroke-width=".85"/></svg>
<svg class="abs" style="left:31.9px;top:409.9px" width="13" height="11.8" viewBox="0 0 13 11.8" fill="none" stroke="#8691a0" stroke-width="1.0" stroke-linecap="round" stroke-linejoin="round"><rect x="0.6" y="3" width="11.8" height="8.2" rx="1.4"/><path d="M4 3 V1.6 a1 1 0 0 1 1 -1 H8 a1 1 0 0 1 1 1 V3 M3.4 3 V11.2 M9.6 3 V11.2"/></svg>
<svg class="abs" style="left:31.9px;top:462.8px" width="13.4" height="9" viewBox="0 0 13.4 9" fill="none" stroke="#8691a0" stroke-width="1.0" stroke-linecap="round" stroke-linejoin="round"><path d="M0.7 8.2 L4.6 4.3 L7.4 6.4 L12.4 1 M8.8 0.7 H12.7 V4.6"/></svg>
<svg class="abs" style="left:33.3px;top:511.6px" width="10.4" height="13.6" viewBox="0 0 10.4 13.6" fill="none" stroke="#8691a0" stroke-width="1.0" stroke-linecap="round" stroke-linejoin="round"><rect x="0.6" y="2.2" width="9.2" height="10.8" rx="1.3"/><path d="M3.4 2.2 V1.2 a.6 .6 0 0 1 .6 -.6 H6.4 a.6 .6 0 0 1 .6 .6 V2.2 M3 3.4 H7.4"/><path d="M2.6 6.2 H3.4 M4.8 6.2 H7.8 M2.6 8.4 H3.4 M4.8 8.4 H7.8 M2.6 10.6 H3.4 M4.8 10.6 H7.8" stroke-width=".85"/></svg>
<svg class="abs" style="left:31.6px;top:566.3px" width="13.6" height="13.8" viewBox="0 0 13.6 13.8" fill="none" stroke="#8691a0" stroke-width="1.0" stroke-linecap="round" stroke-linejoin="round"><circle cx="6.8" cy="7.2" r="5.2"/><path d="M6.8 4.4 V7.4 H8.8 M0.7 3 C0.9 1.6 2 0.8 3.4 0.9 M12.9 3 C12.7 1.6 11.6 0.8 10.2 0.9 M3.2 11.2 L1.8 13.1 M10.4 11.2 L11.8 13.1"/></svg>
<svg class="abs" style="left:31.6px;top:618.7px" width="13.6" height="12.2" viewBox="0 0 13.6 12.2" fill="none" stroke="#8691a0" stroke-width="1.0" stroke-linecap="round" stroke-linejoin="round"><rect x="0.6" y="0.6" width="12.4" height="8.6" rx="1.2"/><path d="M4 11.5 H9.6 M5.6 9.4 V11.4 M8 9.4 V11.4 M3.4 11.6 H10.2"/><path d="M7.8 3.7 C7.5 3.2 7.2 3.1 6.8 3.1 C6.1 3.1 5.8 3.5 5.8 3.9 C5.8 5.1 7.8 4.6 7.8 5.8 C7.8 6.3 7.4 6.7 6.8 6.7 C6.3 6.7 5.9 6.5 5.7 6 M6.8 2.5 V7.3" stroke-width=".8"/></svg>
<svg class="abs" style="left:31.4px;top:671px" width="14" height="10.4" viewBox="0 0 14 10.4" fill="none" stroke="#8691a0" stroke-width="0.9" stroke-linecap="round" stroke-linejoin="round"><path d="M7.2 0.7 L13.3 3 L7.2 5.4 L1 3 Z M3.8 4.2 V7.4 C4.8 8.6 9.4 8.6 10.6 7.4 V4.2 M1.4 3.3 V8.6 M0.8 9.6 H2"/></svg>
<svg class="abs" style="left:31.6px;top:720.7px" width="13.2" height="13.2" viewBox="0 0 13.2 13.2" fill="none" stroke="#8691a0" stroke-width="0.95" stroke-linecap="round" stroke-linejoin="round"><circle cx="2.2" cy="2.2" r="1.6"/><circle cx="6.6" cy="2.2" r="1.6"/><circle cx="11.0" cy="2.2" r="1.6"/><circle cx="2.2" cy="6.6" r="1.6"/><circle cx="6.6" cy="6.6" r="1.6"/><circle cx="11.0" cy="6.6" r="1.6"/><circle cx="2.2" cy="11.0" r="1.6"/><circle cx="6.6" cy="11.0" r="1.6"/><circle cx="11.0" cy="11.0" r="1.6"/></svg>
<svg class="abs" style="left:1316.4px;top:12.5px" width="13.8" height="16.6" viewBox="0 0 13.8 16.6" fill="none" stroke="#fff" stroke-width="1.15" stroke-linecap="round" stroke-linejoin="round"><path d="M6.8 1.2 C3.9 1.2 3.2 3.6 3.2 6 V9.4 C3.2 10.6 1.6 11.4 0.8 12.4 C0.6 12.9 0.8 13.2 1.4 13.2 H12.2 C12.8 13.2 13 12.9 12.8 12.4 C12 11.4 10.4 10.6 10.4 9.4 V6 C10.4 3.6 9.7 1.2 6.8 1.2 Z M5.3 14.7 C5.6 15.9 8 15.9 8.3 14.7"/></svg>
<svg class="abs" style="left:1348.6px;top:12.5px" width="16.6" height="16.4" viewBox="0 0 16.6 16.4" fill="none" stroke="#fff" stroke-width="1.05" stroke-linecap="round" stroke-linejoin="round"><path d="M15 0.9 C12 0.9 8.6 3 7.2 6 C6.6 7.4 6.2 8.8 6.2 10 L10.6 11.8 C12.4 10.8 14.2 8.8 15 6.4 C15.6 4.6 15.5 2.6 15 0.9 Z"/><circle cx="11.6" cy="5" r="1.2" stroke-width=".9"/><path d="M6.9 5.7 C4.4 5 1.8 6.4 0.9 8.6 C2.6 9.4 4.4 9.4 6 8.8 M12.6 10.3 C13 12.4 11.2 14.8 8.3 15.6 C7.9 14.2 8.2 12.8 9 11.6 M4.8 10.6 C2.4 11 0.8 13.2 0.7 15.6 C3.2 15.6 5.6 14.4 6.6 12.2 Z"/></svg>
<div class="abs" style="left:1359.4px;top:6.2px;width:13.4px;height:13.4px;border-radius:50%;border:1px solid rgba(120,140,220,.22)"></div>
<div class="abs" style="left:1363px;top:9.8px;width:6.2px;height:6.2px;border-radius:50%;background:#ee5a50"></div>
<svg class="abs" style="left:1383.3px;top:12.6px" width="14.4" height="15.2" viewBox="0 0 14.4 15.2" fill="none" stroke="#fff" stroke-width="1.05" stroke-linecap="round" stroke-linejoin="round"><path d="M5.88 1.84 L8.62 1.84 L8.84 3.40 L10.70 4.47 L12.15 3.88 L13.53 6.26 L12.29 7.23 L12.29 9.37 L13.53 10.34 L12.15 12.72 L10.70 12.13 L8.84 13.20 L8.62 14.76 L5.88 14.76 L5.66 13.20 L3.80 12.13 L2.35 12.72 L0.97 10.34 L2.21 9.37 L2.21 7.23 L0.97 6.26 L2.35 3.88 L3.80 4.47 L5.66 3.40 Z"/><circle cx="7.25" cy="8.3" r="2.35"/></svg>
<div class="abs" style="left:1413.6px;top:11.2px;width:1px;height:15.8px;background:rgba(255,255,255,.35)"></div>
<svg class="abs" style="left:1426.7px;top:6.7px" width="24.6" height="24.6" viewBox="0 0 24.6 24.6"><defs><clipPath id="av"><circle cx="12.3" cy="12.3" r="12.25"/></clipPath><filter id="avb" x="-10%" y="-10%" width="120%" height="120%"><feGaussianBlur stdDeviation="0.55"/></filter></defs><g clip-path="url(#av)"><rect width="24.6" height="24.6" fill="#b3bdc7"/><g filter="url(#avb)"><rect x="-1" y="9" width="27" height="3" fill="#8f9ba6"/><rect x="-1" y="14" width="27" height="5" fill="#cfd6dc"/><ellipse cx="13.4" cy="27.3" rx="9" ry="6" fill="#c9701f"/><ellipse cx="13.6" cy="13.6" rx="8.2" ry="9.2" fill="#70503f"/><ellipse cx="10" cy="15" rx="2.2" ry="2" fill="#86604d"/><ellipse cx="17.6" cy="15" rx="2.2" ry="2" fill="#86604d"/><path d="M4.6 12.5 C3.4 4 8 0 13.6 0 C19.6 0 23.6 4 22.4 12 C21.6 8.6 20 6.6 13.6 6.6 C8 6.6 5.8 8.4 4.6 12.5 Z" fill="#14100e"/><rect x="7.8" y="9.3" width="4" height="1.5" rx=".7" fill="#3a2921"/><rect x="15" y="9.3" width="4" height="1.5" rx=".7" fill="#3a2921"/><path d="M10.6 16.8 C12 17.4 15 17.4 16.4 16.8 C15.6 19 11.4 19 10.6 16.8 Z" fill="#f4efea"/></g></g></svg>
<svg class="abs" style="left:1406px;top:715px" width="46" height="36" viewBox="1406 715 46 36"><defs><linearGradient id="cg" x1="0" y1="0" x2="0" y2="1"><stop offset="0" stop-color="#3878b8"/><stop offset="1" stop-color="#5140ba"/></linearGradient></defs><circle cx="1433.2" cy="732.9" r="17" fill="url(#cg)"/><rect x="1427.2" y="725.6" width="14.4" height="10.2" rx="2" fill="#b9c4ea"/><path d="M1426.6 727.6 h11.6 a1.8 1.8 0 0 1 1.8 1.8 v7 a1.8 1.8 0 0 1 -1.8 1.8 h-4.2 l-1.9 2.4 l-1.7 -2.4 h-3.8 a1.8 1.8 0 0 1 -1.8 -1.8 v-7 a1.8 1.8 0 0 1 1.8 -1.8 Z" fill="#fff"/><g fill="#6d9fdb"><rect x="1407.7" y="728" width="2" height="2" rx=".5"/><rect x="1411.7" y="728" width="2" height="2" rx=".5"/><rect x="1407.7" y="732.1" width="2" height="2" rx=".5"/><rect x="1411.7" y="732.1" width="2" height="2" rx=".5"/><rect x="1407.7" y="736.2" width="2" height="2" rx=".5"/><rect x="1411.7" y="736.2" width="2" height="2" rx=".5"/></g><text x="1432.4" y="736" font-family="Liberation Sans, sans-serif" font-size="7" font-weight="bold" fill="#5b66c8" text-anchor="middle">?</text></svg>
<div class="abs" style="left:1462.8px;top:0;width:1.2px;height:160px;background:#fff"></div>
<div class="abs" style="left:1462.8px;top:162.2px;width:1.2px;height:598.4px;background:#eceef1"></div>
<div class="abs" style="left:1462.7px;top:162.2px;width:1.3px;height:503.5px;background:#b3b7be"></div>
</div>
</body>
</html>
